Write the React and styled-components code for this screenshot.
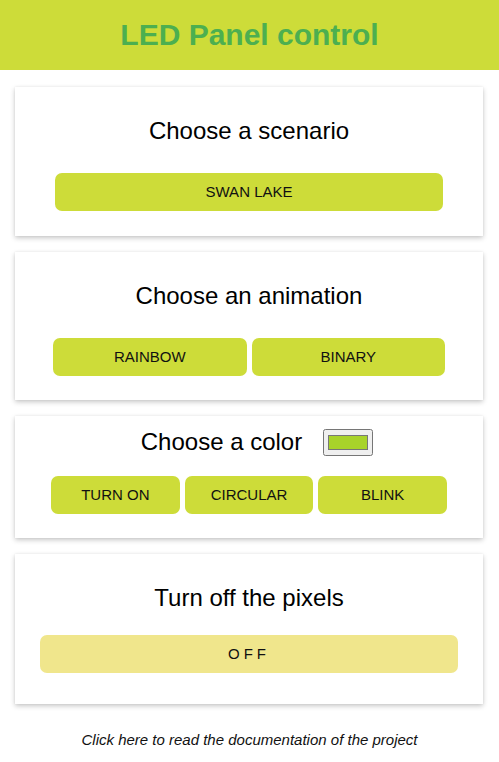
import React from "react";
import styled, { createGlobalStyle } from "styled-components";

const Global = createGlobalStyle`
  html, body { margin: 0; padding: 0; background: #ffffff; }
  body { font-family: "Liberation Sans", Arial, sans-serif; color: #000; }
`;

const Header = styled.header`
  height: 70px;
  background: #cddc39;
  display: flex;
  align-items: center;
  justify-content: center;
`;

const Title = styled.h1`
  margin: 0;
  font-size: 30px;
  font-weight: 700;
  color: #4caf50;
`;

const Main = styled.main`
  display: flex;
  flex-direction: column;
  gap: 16px;
  padding: 17px 16px 0 15px;
`;

const Card = styled.section`
  background: #fff;
  box-shadow: 0 2px 5px rgba(0, 0, 0, 0.22), 0 0 2px rgba(0, 0, 0, 0.06);
  display: flex;
  flex-direction: column;
  align-items: center;
  padding: ${(p) => p.$pad};
`;

const CardTitle = styled.h2`
  margin: 0;
  font-size: 24px;
  font-weight: 400;
  line-height: 28px;
  text-align: center;
`;

const TitleRow = styled.div`
  display: flex;
  align-items: center;
  gap: 21px;
  padding-left: 16px;
`;

const ColorInput = styled.input`
  width: 50px;
  height: 27px;
  margin: 0;
`;

const Row = styled.div`
  display: flex;
  gap: 5px;
  width: ${(p) => p.$w}px;
  margin-top: ${(p) => p.$mt}px;
`;

const Btn = styled.button`
  flex: 1;
  height: 38px;
  border: none;
  border-radius: 7px;
  background: ${(p) => (p.$off ? "#f0e68c" : "#cddc39")};
  color: #111;
  font-family: "Liberation Sans", Arial, sans-serif;
  font-size: 15px;
  letter-spacing: ${(p) => (p.$off ? "4px" : "0")};
  padding: 0 0 2px;
  cursor: pointer;
`;

const Footer = styled.p`
  margin: 27px 0 0;
  text-align: center;
  font-style: italic;
  font-size: 15px;
  color: #111;
`;

export default function App() {
  return (
    <>
      <Global />
      <Header>
        <Title>LED Panel control</Title>
      </Header>
      <Main>
        <Card $pad="30px 0 25px">
          <CardTitle>Choose a scenario</CardTitle>
          <Row $w={388} $mt={28}>
            <Btn>SWAN LAKE</Btn>
          </Row>
        </Card>
        <Card $pad="30px 0 24px">
          <CardTitle>Choose an animation</CardTitle>
          <Row $w={392} $mt={28}>
            <Btn>RAINBOW</Btn>
            <Btn>BINARY</Btn>
          </Row>
        </Card>
        <Card $pad="12px 0 24px">
          <TitleRow>
            <CardTitle>Choose a color</CardTitle>
            <ColorInput type="color" defaultValue="#a8d32a" />
          </TitleRow>
          <Row $w={396} $mt={20}>
            <Btn>TURN ON</Btn>
            <Btn>CIRCULAR</Btn>
            <Btn>BLINK</Btn>
          </Row>
        </Card>
        <Card $pad="30px 0 31px">
          <CardTitle>Turn off the pixels</CardTitle>
          <Row $w={418} $mt={23}>
            <Btn $off>OFF</Btn>
          </Row>
        </Card>
      </Main>
      <Footer>Click here to read the documentation of the project</Footer>
    </>
  );
}
